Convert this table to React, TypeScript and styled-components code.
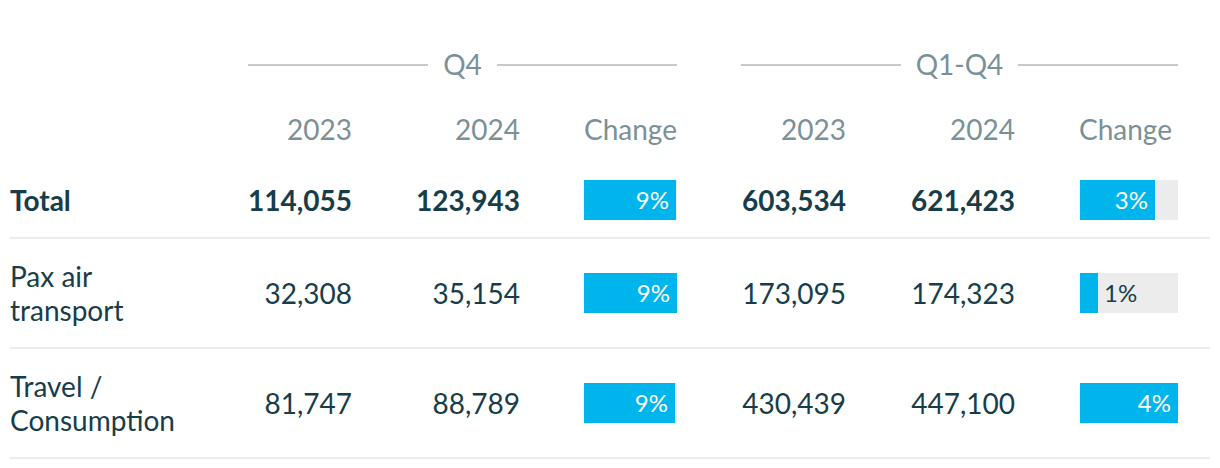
import React from "react";
import styled, { createGlobalStyle } from "styled-components";

const GlobalStyle = createGlobalStyle`
  html, body { margin: 0; padding: 0; background: #ffffff; }
  body { font-family: Lato, "Open Sans", sans-serif; }
`;

const COLS = "174px 104px 104px 93px 105px 105px 99px";

const Table = styled.div`
  width: 1200px;
  margin-left: 10px;
  padding-top: 48px;
  font-family: Lato, sans-serif;
  color: #173d4a;
`;

const Grid = styled.div`
  display: grid;
  grid-template-columns: ${COLS};
  column-gap: 64px;
  padding-right: 32px;
  align-items: center;
`;

const GroupRow = styled(Grid)`
  height: 33px;
  margin-bottom: 32px;
`;

const Group = styled.div<{ $start: number }>`
  grid-column: ${(p) => p.$start} / span 3;
  display: flex;
  align-items: center;
  gap: 15px;
  font-size: 28px;
  line-height: 33px;
  color: #7a9197;
`;

const Rule = styled.span`
  flex: 1;
  height: 2px;
  background: #c9c9c9;
`;

const YearRow = styled(Grid)`
  height: 33px;
  padding-bottom: 17px;
`;

const HeadCell = styled.div<{ $pad?: number }>`
  font-size: 28px;
  line-height: 33px;
  color: #7a9197;
  text-align: right;
  padding-right: ${(p) => p.$pad ?? 0}px;
`;

const Row = styled(Grid)`
  padding-top: 20px;
  padding-bottom: 20px;
  border-bottom: 2px solid #ececec;
`;

const Label = styled.div<{ $bold?: boolean }>`
  font-size: 28px;
  line-height: 34px;
  font-weight: ${(p) => (p.$bold ? 700 : 400)};
`;

const Num = styled.div<{ $bold?: boolean }>`
  font-size: 28px;
  line-height: 34px;
  text-align: right;
  font-weight: ${(p) => (p.$bold ? 700 : 400)};
`;

const BarCell = styled.div`
  display: flex;
  justify-content: flex-end;
  align-items: center;
  height: 34px;
`;

const Track = styled.div<{ $w: number }>`
  width: ${(p) => p.$w}px;
  height: 40px;
  flex-shrink: 0;
  background: #ececec;
  display: flex;
  align-items: center;
`;

const Fill = styled.div`
  height: 100%;
  background: #00b4ec;
  display: flex;
  align-items: center;
  justify-content: flex-end;
  flex-shrink: 0;
`;

const Pct = styled.span<{ $inside: boolean }>`
  font-size: 24px;
  line-height: 1;
  white-space: nowrap;
  color: ${(p) => (p.$inside ? "#ffffff" : "#173d4a")};
  padding: ${(p) => (p.$inside ? "0 7px 0 0" : "0 0 0 6px")};
`;

type Rw = {
  label: string;
  bold?: boolean;
  q4: [number, number];
  yr: [number, number];
};

const rows: Rw[] = [
  { label: "Total", bold: true, q4: [114055, 123943], yr: [603534, 621423] },
  { label: "Pax air transport", q4: [32308, 35154], yr: [173095, 174323] },
  { label: "Travel / Consumption", q4: [81747, 88789], yr: [430439, 447100] },
];

const fmt = (n: number) => n.toLocaleString("en-US");
const chg = (a: number, b: number) => ((b - a) / a) * 100;

const q4Max = Math.max(...rows.map((r) => chg(r.q4[0], r.q4[1])));
const yrMax = Math.max(...rows.map((r) => chg(r.yr[0], r.yr[1])));

function Bar({ value, max, width }: { value: number; max: number; width: number }) {
  const fw = Math.round((value / max) * width);
  const inside = fw > 50;
  const label = `${Math.round(value)}%`;
  return (
    <BarCell>
      <Track $w={width}>
        <Fill style={{ width: fw }}>{inside && <Pct $inside>{label}</Pct>}</Fill>
        {!inside && <Pct $inside={false}>{label}</Pct>}
      </Track>
    </BarCell>
  );
}

export default function App() {
  return (
    <>
      <GlobalStyle />
      <Table>
        <GroupRow>
          <Group $start={2}>
            <Rule />
            Q4
            <Rule />
          </Group>
          <Group $start={5}>
            <Rule />
            Q1-Q4
            <Rule />
          </Group>
        </GroupRow>
        <YearRow>
          <div />
          <HeadCell>2023</HeadCell>
          <HeadCell>2024</HeadCell>
          <HeadCell>Change</HeadCell>
          <HeadCell>2023</HeadCell>
          <HeadCell>2024</HeadCell>
          <HeadCell $pad={6}>Change</HeadCell>
        </YearRow>
        {rows.map((r) => (
          <Row key={r.label}>
            <Label $bold={r.bold}>{r.label}</Label>
            <Num $bold={r.bold}>{fmt(r.q4[0])}</Num>
            <Num $bold={r.bold}>{fmt(r.q4[1])}</Num>
            <Bar value={chg(r.q4[0], r.q4[1])} max={q4Max} width={93} />
            <Num $bold={r.bold}>{fmt(r.yr[0])}</Num>
            <Num $bold={r.bold}>{fmt(r.yr[1])}</Num>
            <Bar value={chg(r.yr[0], r.yr[1])} max={yrMax} width={98} />
          </Row>
        ))}
      </Table>
    </>
  );
}
